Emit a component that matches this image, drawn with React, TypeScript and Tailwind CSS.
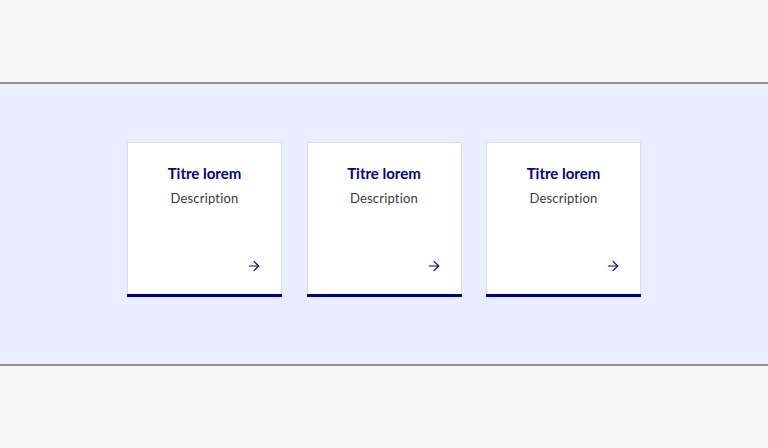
import { ArrowRight } from "lucide-react"

const tiles = [
  { title: "Titre lorem", desc: "Description" },
  { title: "Titre lorem", desc: "Description" },
  { title: "Titre lorem", desc: "Description" },
]

function Tile({ title, desc }: { title: string; desc: string }) {
  return (
    <div className="w-[155px] h-[155px] bg-white border border-[#dddddd] border-b-0 flex flex-col">
      <div className="flex-1 flex flex-col items-center pt-[20px]">
        <h3 className="text-[15px] leading-[20px] font-bold text-[#000091]">{title}</h3>
        <p className="mt-[5px] text-[13px] leading-[20px] text-[#3a3a3a] tracking-[0.2px]">{desc}</p>
      </div>
      <div className="flex justify-end pr-[19px] pb-[20px]">
        <ArrowRight className="w-[16px] h-[16px] text-[#000091]" strokeWidth={1.75} />
      </div>
      <div className="h-[3px] bg-[#000091] -mx-px" />
    </div>
  )
}

export default function App() {
  return (
    <div className="w-[768px] h-[448px] bg-[#f6f6f6] flex flex-col" style={{ fontFamily: "Lato, 'Noto Sans', sans-serif" }}>
      <div className="h-[82px]" />
      <div className="h-[2px] bg-[#929292]" />
      <div className="h-[280px] bg-[#e8edff] flex justify-start gap-[24.5px] pt-[58px] pl-[127px]">
        {tiles.map((t, i) => (
          <Tile key={i} title={t.title} desc={t.desc} />
        ))}
      </div>
      <div className="h-[2px] bg-[#929292]" />
      <div className="flex-1" />
    </div>
  )
}
